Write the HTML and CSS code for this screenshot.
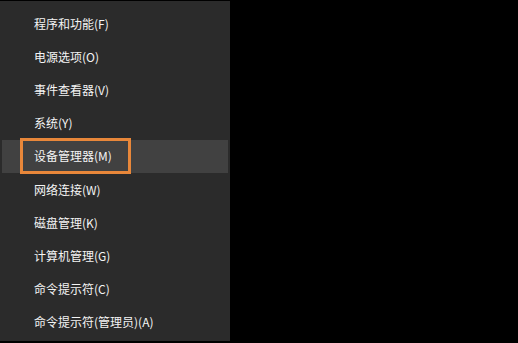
FILE: index.html
```html
<!DOCTYPE html>
<html lang="zh-CN">
<head>
<meta charset="utf-8">
<title>Win+X</title>
<link rel="stylesheet" href="styles.css">
</head>
<body>
<div class="screen">
  <ul class="menu">
    <li class="item">程序和功能(F)</li>
    <li class="item">电源选项(O)</li>
    <li class="item">事件查看器(V)</li>
    <li class="item">系统(Y)</li>
    <li class="item active">设备管理器(M)<span class="mark"></span></li>
    <li class="item">网络连接(W)</li>
    <li class="item">磁盘管理(K)</li>
    <li class="item">计算机管理(G)</li>
    <li class="item">命令提示符(C)</li>
    <li class="item">命令提示符(管理员)(A)</li>
  </ul>
</div>
</body>
</html>
```
FILE: styles.css
```css
html, body {
  margin: 0;
  padding: 0;
  background: #000;
}
.screen {
  width: 518px;
  height: 343px;
  background: #000;
  padding-top: 1px;
  box-sizing: border-box;
}
.menu {
  list-style: none;
  margin: 0;
  padding: 6px 2px 0 2px;
  width: 230px;
  height: 340px;
  box-sizing: border-box;
  background: #2b2b2b;
  font-family: "Noto Sans CJK SC", "Noto Sans", sans-serif;
  font-size: 12px;
  color: #f4f4f4;
}
.item {
  position: relative;
  height: 33.2px;
  display: flex;
  align-items: center;
  padding-left: 32px;
  padding-bottom: 1px;
  box-sizing: border-box;
}
.item.active {
  background: #414141;
}
.mark {
  position: absolute;
  left: 18px;
  top: -2px;
  width: 111px;
  height: 36px;
  box-sizing: border-box;
  border: 3px solid #e8873a;
}
```
